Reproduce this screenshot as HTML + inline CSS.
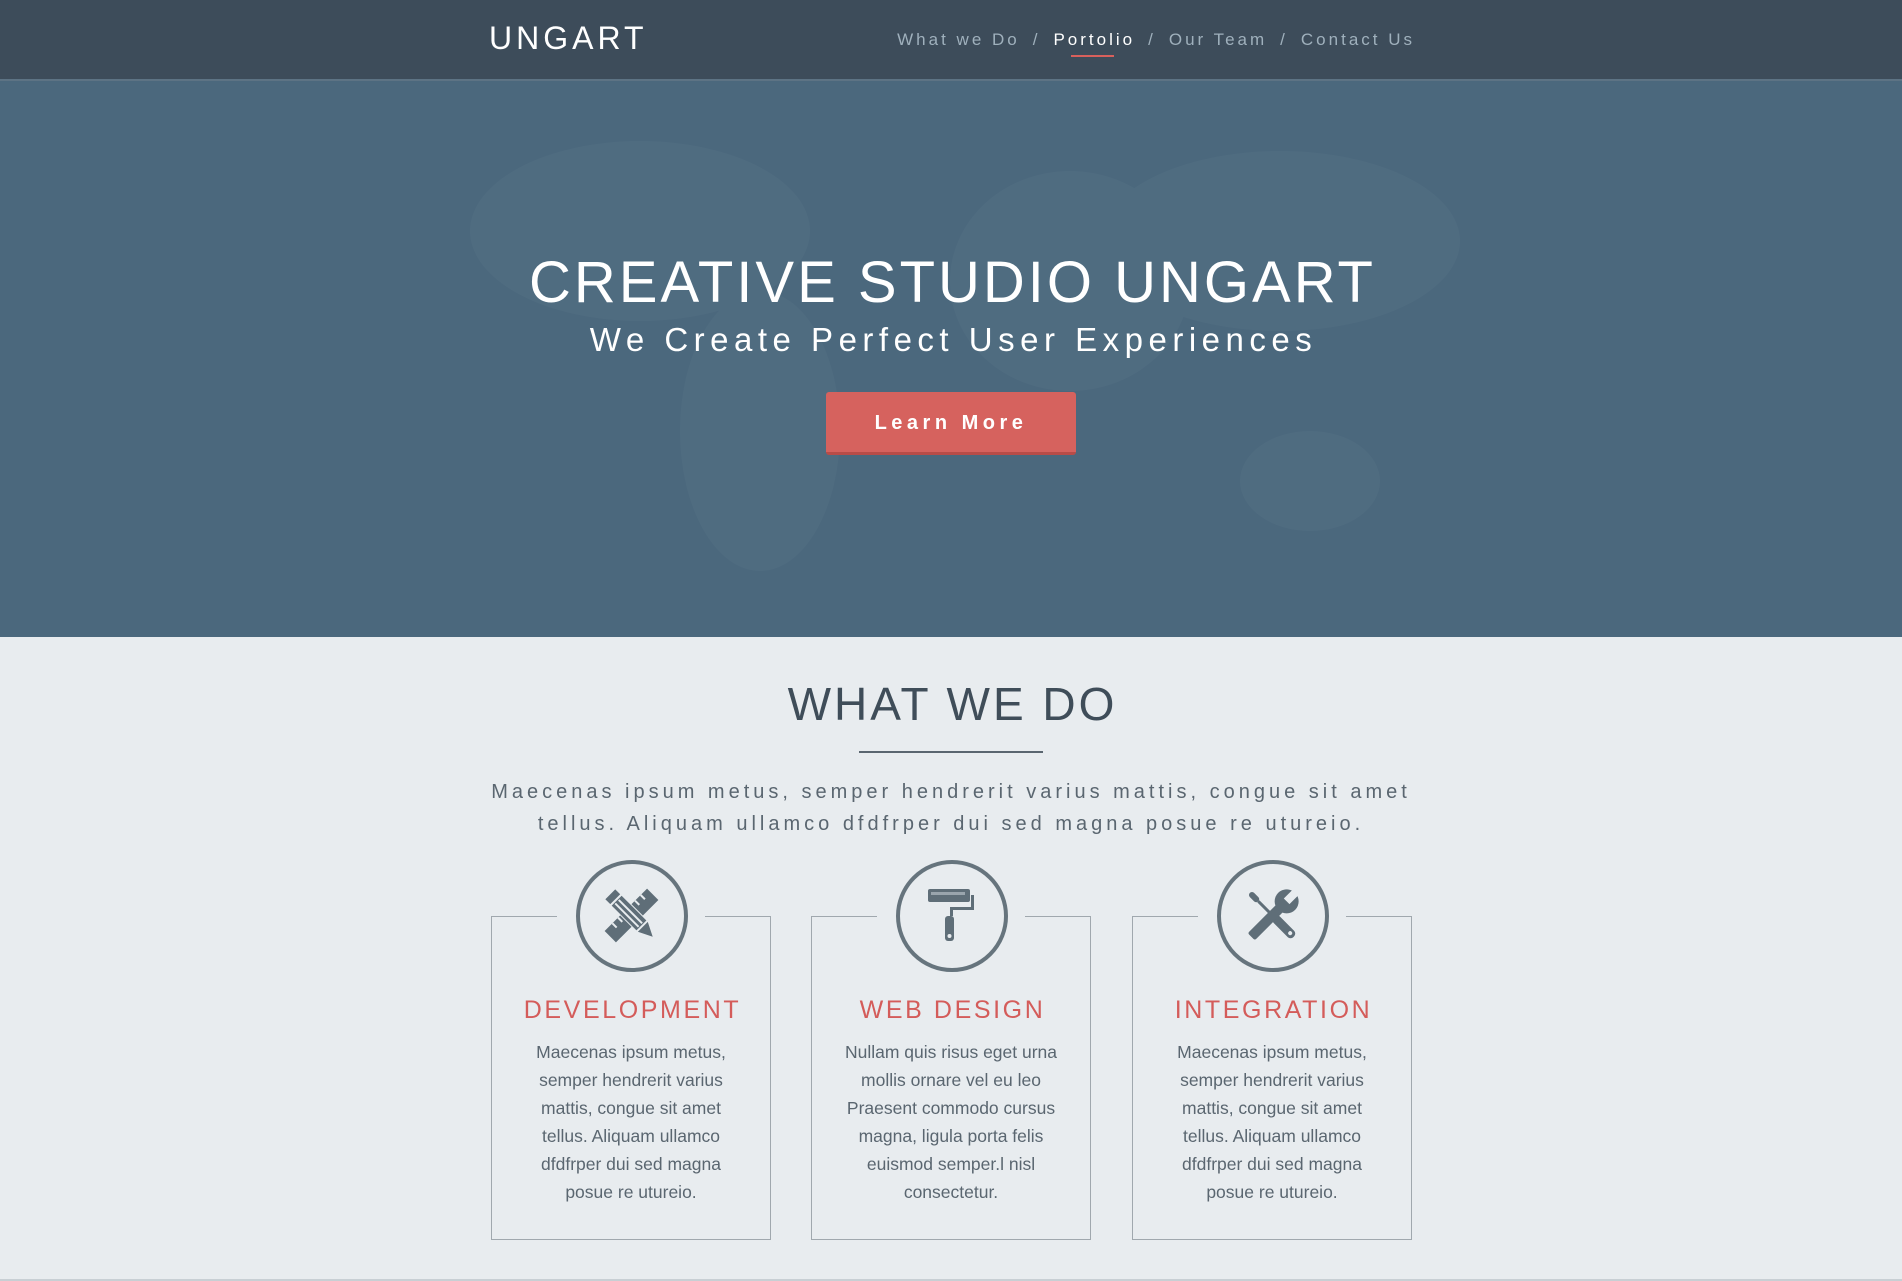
<!DOCTYPE html>
<html><head><meta charset="utf-8">
<style>
*{margin:0;padding:0;box-sizing:border-box}
body{width:1902px;height:1281px;overflow:hidden;background:#e8ecef;font-family:"Liberation Sans",sans-serif;position:relative}
.nav{position:absolute;left:0;top:0;width:1902px;height:81px;background:#3d4c5a;border-bottom:2px solid #5d7384}
.logo{position:absolute;left:489px;top:20px;color:#fff;font-size:32px;letter-spacing:4px;font-weight:normal}
.links{position:absolute;right:487px;top:30px;color:#9fb0bc;font-size:17px;letter-spacing:3px;white-space:nowrap}
.links span.sep{margin:0 13px}
.links .act{color:#fff;position:relative}
.links .act:after{content:"";position:absolute;left:18px;right:21px;top:25px;height:2px;background:#d9605c}
.hero{position:absolute;left:0;top:81px;width:1902px;height:556px;background:#4b687d;overflow:hidden}
.hero h1{position:absolute;left:0;width:1902px;top:168px;text-align:center;color:#fff;font-weight:normal;font-size:58px;letter-spacing:3px;padding-left:3px}
.hero h2{position:absolute;left:0;width:1902px;top:240px;text-align:center;color:#fff;font-weight:normal;font-size:33px;letter-spacing:5.5px;padding-left:5px}
.btn{position:absolute;left:826px;top:311px;width:250px;height:63px;background:#d6625e;border-bottom:3px solid #b84c48;border-radius:3px;color:#fff;font-weight:bold;font-size:20px;letter-spacing:4.5px;text-align:center;line-height:62px}
.sec h3{position:absolute;left:0;width:1902px;top:677px;text-align:center;color:#3f4d59;font-weight:normal;font-size:46px;letter-spacing:3px;padding-left:3px}
.uline{position:absolute;left:859px;top:751px;width:184px;height:2px;background:#5a6670}
.para{position:absolute;left:0;width:1902px;top:776px;text-align:center;color:#5a6670;font-size:20px;letter-spacing:4px;line-height:32px}
.box{position:absolute;top:916px;width:280px;height:324px;border:1px solid #a0a8ae;border-top:none}
.box .tl{position:absolute;top:0;left:-1px;width:66px;height:1px;background:#a0a8ae}
.box .tr{position:absolute;top:0;right:-1px;width:66px;height:1px;background:#a0a8ae}
.circ{position:absolute;top:-56px;left:84px;width:112px;height:112px;border:4.5px solid #66747d;border-radius:50%}
.circ svg{position:absolute;left:0;top:0}
.box h4{position:absolute;top:80px;left:0;width:100%;text-align:center;color:#d45c5a;font-weight:normal;font-size:25px;letter-spacing:2.6px;padding-left:3px}
.box p{position:absolute;top:122px;left:0;width:100%;text-align:center;color:#5a6670;font-size:17.5px;line-height:28px}
.bot{position:absolute;left:0;top:1279px;width:1902px;height:2px;background:#c8cfd4}
</style></head><body>
<div class="nav">
<div class="logo">UNGART</div>
<div class="links">What we Do<span class="sep">/</span><span class="act">Portolio</span><span class="sep">/</span>Our Team<span class="sep">/</span>Contact Us</div>
</div>
<div class="hero">
<svg width="1902" height="556" style="position:absolute;left:0;top:0;opacity:.025">
<ellipse cx="640" cy="150" rx="170" ry="90" fill="#fff"/>
<ellipse cx="760" cy="350" rx="80" ry="140" fill="#fff"/>
<ellipse cx="1070" cy="200" rx="120" ry="110" fill="#fff"/>
<ellipse cx="1280" cy="160" rx="180" ry="90" fill="#fff"/>
<ellipse cx="1310" cy="400" rx="70" ry="50" fill="#fff"/>
</svg>
<h1>CREATIVE STUDIO UNGART</h1>
<h2>We Create Perfect User Experiences</h2>
<div class="btn">Learn More</div>
</div>
<div class="sec">
<h3>WHAT WE DO</h3>
<div class="uline"></div>
<div class="para">Maecenas ipsum metus, semper hendrerit varius mattis, congue sit amet<br>tellus. Aliquam ullamco dfdfrper dui sed magna posue re utureio.</div>
</div>

<div class="box" style="left:491px"><div class="tl"></div><div class="tr"></div>
<div class="circ"><svg width="103" height="103" viewBox="0 0 103 103">
<g fill="#5f6e78" transform="translate(51.5,51.5)">
<g transform="rotate(45)"><rect x="-8" y="-30" width="16" height="60"/><g fill="#e8ecef"><rect x="-8" y="-22" width="6" height="2"/><rect x="-8" y="-14" width="6" height="2"/><rect x="-8" y="-6" width="6" height="2"/><rect x="-8" y="10" width="6" height="2"/><rect x="-8" y="18" width="6" height="2"/></g></g>
<g transform="rotate(-45)"><rect x="-8" y="-30" width="16" height="44" fill="#e8ecef"/><rect x="-7" y="-30" width="14" height="7"/><rect x="-7" y="-21" width="14" height="35"/><g fill="#e8ecef"><rect x="-4" y="-20" width="2" height="33"/><rect x="1" y="-20" width="2" height="33"/></g><polygon points="-7,16 7,16 0,30"/></g>
</g></svg></div>
<h4>DEVELOPMENT</h4>
<p>Maecenas ipsum metus,<br>semper hendrerit varius<br>mattis, congue sit amet<br>tellus. Aliquam ullamco<br>dfdfrper dui sed magna<br>posue re utureio.</p>
</div>

<div class="box" style="left:811px"><div class="tl"></div><div class="tr"></div>
<div class="circ"><svg width="103" height="103" viewBox="0 0 103 103">
<g fill="#5f6e78"><rect x="28" y="25" width="42" height="13" rx="2"/><rect x="31" y="28" width="34" height="3" fill="#9aa5ad"/>
<path d="M70 31 h4 v15 h-21 v6 h-3 v-9 h21 v-12z"/>
<rect x="45" y="52" width="9" height="25" rx="3"/><circle cx="49.5" cy="72" r="2" fill="#e8ecef"/></g></svg></div>
<h4>WEB DESIGN</h4>
<p>Nullam quis risus eget urna<br>mollis ornare vel eu leo<br>Praesent commodo cursus<br>magna, ligula porta felis<br>euismod semper.l nisl<br>consectetur.</p>
</div>

<div class="box" style="left:1132px"><div class="tl"></div><div class="tr"></div>
<div class="circ"><svg width="103" height="103" viewBox="0 0 103 103">
<g fill="#5f6e78" transform="translate(51.5,51.5)">
<g transform="rotate(-45)"><rect x="-3" y="-32" width="6" height="12" rx="3"/><rect x="-1.5" y="-20" width="3" height="22"/><rect x="-4.5" y="2" width="9" height="28" rx="4"/><circle cx="0" cy="25" r="2" fill="#e8ecef"/></g>
<g transform="rotate(45)"><rect x="-5" y="-14" width="10" height="44" rx="2"/><circle cx="0" cy="-20" r="12"/><rect x="-4" y="-34" width="8" height="14" fill="#e8ecef"/></g>
</g></svg></div>
<h4>INTEGRATION</h4>
<p>Maecenas ipsum metus,<br>semper hendrerit varius<br>mattis, congue sit amet<br>tellus. Aliquam ullamco<br>dfdfrper dui sed magna<br>posue re utureio.</p>
</div>
<div class="bot"></div>
</body></html>
